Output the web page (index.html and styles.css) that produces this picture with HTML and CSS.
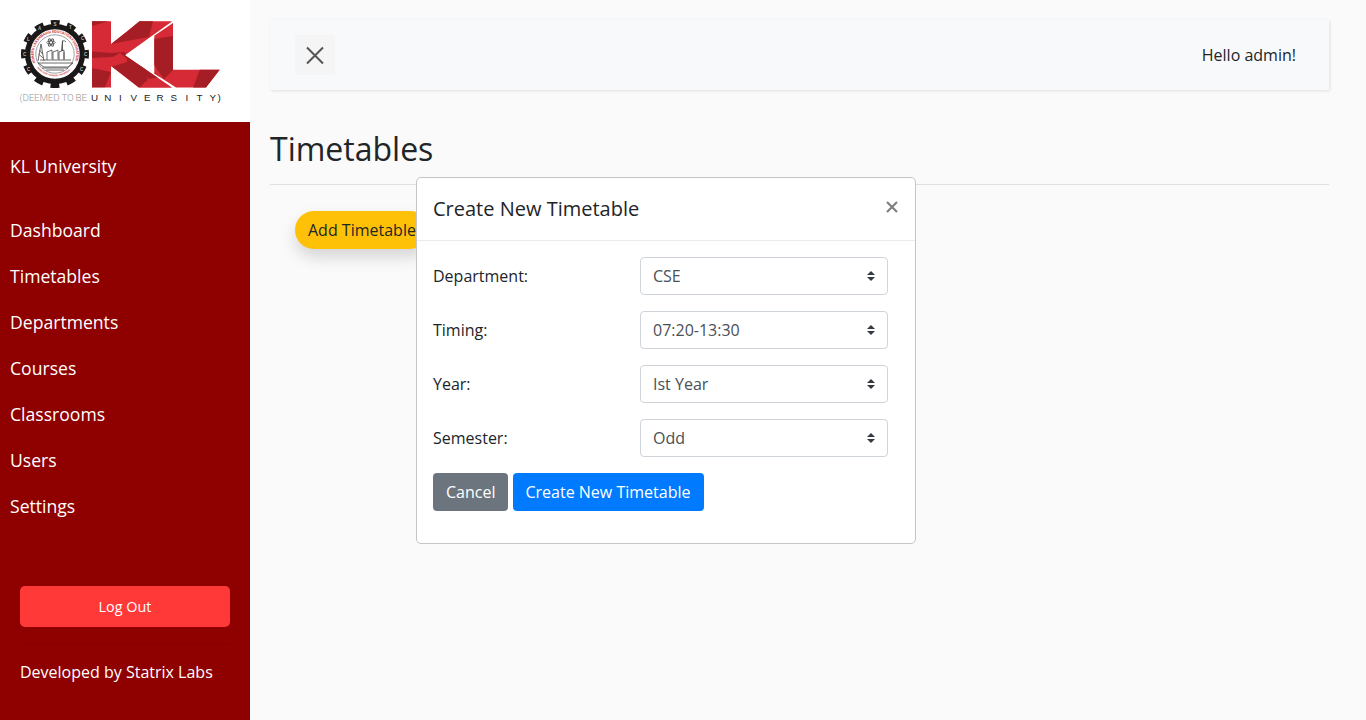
FILE: index.html
```html
<!DOCTYPE html>
<html lang="en">
<head>
<meta charset="utf-8">
<title>Timetables</title>
<link rel="stylesheet" href="styles.css">
</head>
<body>
<div class="wrapper">
  <nav class="sidebar">
    <div class="brand">
      <svg class="logo" width="250" height="122" viewBox="0 0 250 122">
        <defs>
          <path id="arcTop" d="M35.6 62.5A21.2 21.2 0 1 1 74.4 62.5"/>
          <path id="arcBottom" d="M33 60A23 23 0 0 0 77 60"/>
          <clipPath id="kl"><path d="M92 21.3H111V44L139.5 21.3H172.3L125 55.3L172 87.5H138.5L111 66V87.5H92ZM154.3 35.7L173 23V69.8H219.7L206 87.5H176L154.3 73.4Z"/></clipPath>
        </defs>
        <circle class="teeth" cx="55" cy="54" r="30.8"/>
        <circle class="gear" cx="55" cy="54" r="27.4"/>
        <g class="tooth-text">
          <text x="53.5" y="26">S</text><text x="38" y="30">A</text><text x="69" y="29">T</text>
          <text x="81" y="40">C</text><text x="84" y="56">C</text><text x="80" y="71">C</text>
          <text x="23" y="56">C</text><text x="27" y="41">L</text><text x="27" y="71">C</text>
        </g>
        <text class="seal-text"><textPath href="#arcTop" textLength="82" lengthAdjust="spacingAndGlyphs">KONERU LAKSHMAIAH EDUCATION FOUNDATION</textPath></text>
        <text class="seal-small"><textPath href="#arcBottom" startOffset="9" textLength="37" lengthAdjust="spacingAndGlyphs">KNOWLEDGE • HARMONY • PROSPERITY</textPath></text>
        <circle class="seal-ring" cx="55" cy="54" r="19.2"/>
        <g class="seal-line">
          <path d="M38 61L41 44L44 61M38.5 54L43 58M39.5 50L42.5 54M47 60V52L52 50V59M53 60V52L58 50V59M59 60V52L64 50V59M61.5 51L62.5 41V51M62 41Q65 40 66 42M64 52V60M38 63H73L68 67H44L38 63M40 60H71M42 68H68M46 70H64"/>
          <ellipse cx="51" cy="42.5" rx="4.3" ry="1.6"/><ellipse cx="51" cy="42.5" rx="4.3" ry="1.6" transform="rotate(60 51 42.5)"/><ellipse cx="51" cy="42.5" rx="4.3" ry="1.6" transform="rotate(120 51 42.5)"/>
        </g>
        <g clip-path="url(#kl)">
          <path fill="#d62b36" d="M90 20H221V89H90Z"/>
          <path fill="#a61e25" d="M92 21H109L92 26ZM92 51.5L111 53L125 52L127 59L111 57L92 58ZM111 44L128 31L139 21H153L149 37L127 41ZM92 68L111 72L105 87.5H92ZM123 54L137 60L144 66L148 81L140 88L111 66L127 59ZM154 39L173 36V70L164 79L154 65ZM200 69H221L206 88H193Z"/>
          <path fill="#d62b36" d="M120 53L127 59L127 62L111 67V58ZM143 84L149 79L173 88H140Z"/>
          <path fill="#a61e25" d="M140 62L160 77L149 79L142 70Z"/>
        </g>
        <text class="deemed" x="19.5" y="101" textLength="67.5">(DEEMED TO BE</text>
        <text class="univ" y="101" x="91 104.3 119 130.5 144 156.5 170.5 185.5 196.5 209.5 217.5">UNIVERSITY)</text>
      </svg>
    </div>
    <div class="side-title">KL University</div>
    <ul class="menu">
      <li>Dashboard</li><li>Timetables</li><li>Departments</li><li>Courses</li><li>Classrooms</li><li>Users</li><li>Settings</li>
    </ul>
    <div class="side-foot">
      <a class="logout">Log Out</a>
      <p class="credit">Developed by Statrix Labs</p>
    </div>
  </nav>
  <main class="content">
    <header class="topbar">
      <button class="toggle" aria-label="Toggle sidebar"><svg width="40" height="40" viewBox="0 0 40 40"><path d="M12 12.5L28 28.5M28 12.5L12 28.5"/></svg></button>
      <span>Hello admin!</span>
    </header>
    <h2 class="page-title">Timetables</h2>
    <hr class="rule">
    <button class="add">Add Timetable</button>
  </main>
</div>
<section class="modal">
  <div class="modal-head"><h5>Create New Timetable</h5><svg class="close" width="12" height="12" viewBox="0 0 12 12"><path d="M1 1L11 11M11 1L1 11"/></svg></div>
  <div class="modal-body">
    <div class="field"><label>Department:</label><div class="select">CSE<svg width="8" height="10" viewBox="0 0 4 5"><path d="M2 0L0 2h4zm0 5L0 3h4z"/></svg></div></div>
    <div class="field"><label>Timing:</label><div class="select">07:20-13:30<svg width="8" height="10" viewBox="0 0 4 5"><path d="M2 0L0 2h4zm0 5L0 3h4z"/></svg></div></div>
    <div class="field"><label>Year:</label><div class="select">Ist Year<svg width="8" height="10" viewBox="0 0 4 5"><path d="M2 0L0 2h4zm0 5L0 3h4z"/></svg></div></div>
    <div class="field"><label>Semester:</label><div class="select">Odd<svg width="8" height="10" viewBox="0 0 4 5"><path d="M2 0L0 2h4zm0 5L0 3h4z"/></svg></div></div>
    <div class="actions"><button class="btn cancel">Cancel</button><button class="btn create">Create New Timetable</button></div>
  </div>
</section>
</body>
</html>
```
FILE: styles.css
```css
* { box-sizing: border-box; }
body { margin: 0; background: #fafafa; color: #212529; font: 400 16px/1.5 "Open Sans", sans-serif; overflow: hidden; }
button { font: inherit; border: 0; }
.wrapper { display: flex; height: 720px; }
.sidebar { width: 250px; flex: none; background: #8f0000; color: #fff; }
.brand { height: 122px; background: #fff; }
.logo { display: block; }
.teeth { fill: none; stroke: #1b1819; stroke-width: 6.4; stroke-dasharray: 8.6 7.527; stroke-dashoffset: 4.3; }
.gear { fill: #fff; stroke: #1b1819; stroke-width: 5.4; }
.tooth-text { font: 700 4.5px "Liberation Sans", sans-serif; fill: #bbb; }
.seal-text { font: 700 3.9px "Liberation Sans", sans-serif; fill: #c9252c; }
.seal-small { font: 700 2.3px "Liberation Sans", sans-serif; fill: #c9252c; }
.seal-ring { fill: none; stroke: #777; stroke-width: .7; }
.seal-line { fill: none; stroke: #444; stroke-width: .8; }
.deemed { font: 300 9.8px Roboto, sans-serif; fill: #999; }
.univ { font: 400 9.8px "Liberation Sans", sans-serif; fill: #222; }
.side-title { padding: 31px 10px 0; font-size: 17.6px; }
.menu { list-style: none; margin: 0; padding: 28px 0 0; font-size: 17.6px; }
.menu li { padding: 10px; height: 46px; line-height: 26px; }
.side-foot { padding: 57px 20px 0; }
.logout { display: block; height: 41px; border-radius: 5px; background: #ff3838; text-align: center; font-size: 14.4px; line-height: 41px; }
.credit { margin: 16px 0 0; padding-top: 16px; border-top: 1px solid #870000; }
.content { flex: 1; padding: 20px 37px 0 20px; }
.topbar { display: flex; justify-content: space-between; align-items: center; height: 70px; padding: 0 33px 0 25px; background: #f8f9fb; box-shadow: 1px 1px 3px rgba(0,0,0,.1); }
.toggle { width: 40px; height: 40px; padding: 0; background: #f5f5f5; }
.toggle svg { display: block; fill: none; stroke: #555; stroke-width: 2; }
.page-title { margin: 40px 0 0; font-weight: 400; font-size: 32px; line-height: 38px; }
.rule { margin: 16px 0 26px; border: 0; border-top: 1px solid #e0e0e0; }
.add { margin-left: 25px; height: 38px; padding: 0 13px; border-radius: 19px; background: #ffc107; color: #212529; box-shadow: 0 8px 16px rgba(0,0,0,.15); }
.modal { position: absolute; left: 416px; top: 177px; width: 500px; height: 367px; background: #fff; border: 1px solid #c5c5c5; border-radius: 5px; }
.modal-head { display: flex; justify-content: space-between; height: 63px; padding: 16px; border-bottom: 1px solid #e9ecef; }
.modal-head h5 { margin: 0; font-weight: 400; font-size: 20px; line-height: 30px; }
.close { margin: 7px 1px 0 0; fill: none; stroke: #808080; stroke-width: 2.2; }
.modal-body { display: grid; gap: 16px; padding: 16px 27px 0 16px; }
.field { display: grid; grid-template-columns: 1fr 248px; align-items: center; height: 38px; }
.select { display: flex; justify-content: space-between; align-items: center; height: 38px; padding: 0 12px; border: 1px solid #ced4da; border-radius: 4px; color: #495057; }
.select svg { fill: #343a40; }
.actions { display: flex; gap: 5px; }
.btn { height: 38px; padding: 0 13px; border-radius: 4px; color: #fff; }
.cancel { background: #6c757d; }
.create { width: 191px; padding: 0 13px 0 12px; text-align: left; background: #007bff; }
```
